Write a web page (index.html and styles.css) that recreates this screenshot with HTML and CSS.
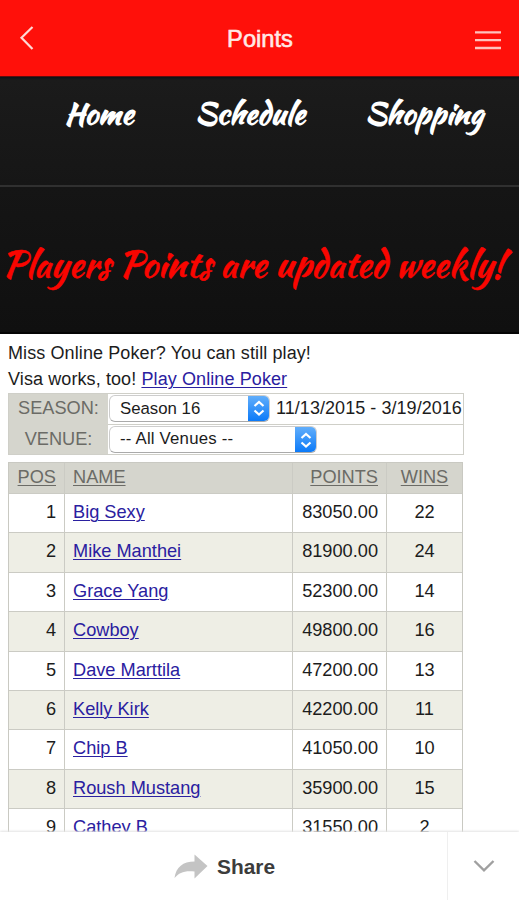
FILE: index.html
```html
<!DOCTYPE html>
<html lang="en">
<head>
<meta charset="utf-8">
<title>Points</title>
<link rel="stylesheet" href="styles.css">
</head>
<body>
<div class="app">
  <header class="topbar">
    <svg class="back" width="16" height="26" viewBox="0 0 16 26"><path d="M13.5 2 2.5 12.7 13.5 24"/></svg>
    <h1>Points</h1>
    <svg class="menu" width="28" height="20" viewBox="0 0 28 20"><path d="M1 2.3h26M1 10.2h26M1 18h26"/></svg>
  </header>
  <nav class="nav">
    <svg width="519" height="109" viewBox="0 0 519 109">
      <text x="64.5" y="47" textLength="69" lengthAdjust="spacingAndGlyphs">Home</text>
      <text x="195" y="47" textLength="110" lengthAdjust="spacingAndGlyphs">Schedule</text>
      <text x="365" y="47" textLength="118" lengthAdjust="spacingAndGlyphs">Shopping</text>
    </svg>
  </nav>
  <section class="banner">
    <svg width="519" height="145" viewBox="0 0 519 145">
      <text x="2" y="90" textLength="502" lengthAdjust="spacingAndGlyphs">Players Points are updated weekly!</text>
    </svg>
  </section>
  <main class="content">
    <p>Miss Online Poker? You can still play!</p>
    <p>Visa works, too! <a>Play Online Poker</a></p>
    <div class="filters">
      <div class="label">SEASON:</div>
      <div class="field">
        <div class="select season"><span>Season 16</span><i><svg width="12" height="16" viewBox="0 0 12 16"><path d="M1.5 6 6 2l4.5 4M1.5 10.5l4.5 4 4.5-4"/></svg></i></div>
        <span class="dates">11/13/2015 - 3/19/2016</span>
      </div>
      <div class="label">VENUE:</div>
      <div class="field">
        <div class="select venue"><span>-- All Venues --</span><i><svg width="12" height="16" viewBox="0 0 12 16"><path d="M1.5 6 6 2l4.5 4M1.5 10.5l4.5 4 4.5-4"/></svg></i></div>
      </div>
    </div>
    <div class="table">
      <div class="row head"><div><u>POS</u></div><div><u>NAME</u></div><div><u>POINTS</u></div><div><u>WINS</u></div></div>
      <div class="row"><div>1</div><div><a>Big Sexy</a></div><div>83050.00</div><div>22</div></div>
      <div class="row alt"><div>2</div><div><a>Mike Manthei</a></div><div>81900.00</div><div>24</div></div>
      <div class="row"><div>3</div><div><a>Grace Yang</a></div><div>52300.00</div><div>14</div></div>
      <div class="row alt"><div>4</div><div><a>Cowboy</a></div><div>49800.00</div><div>16</div></div>
      <div class="row"><div>5</div><div><a>Dave Marttila</a></div><div>47200.00</div><div>13</div></div>
      <div class="row alt"><div>6</div><div><a>Kelly Kirk</a></div><div>42200.00</div><div>11</div></div>
      <div class="row"><div>7</div><div><a>Chip B</a></div><div>41050.00</div><div>10</div></div>
      <div class="row alt"><div>8</div><div><a>Roush Mustang</a></div><div>35900.00</div><div>15</div></div>
      <div class="row"><div>9</div><div><a>Cathey B</a></div><div>31550.00</div><div>2</div></div>
    </div>
  </main>
  <footer class="bottombar">
    <div class="share">
      <svg width="34" height="26" viewBox="0 0 34 26"><path d="M20.5 0.5 33.5 12 20.5 24.5V17.5C10 16.5 5.5 18.5 0.5 24 2 13 9 7.5 20.5 7.5Z"/></svg>
      <span>Share</span>
    </div>
    <div class="collapse"><svg width="22" height="14" viewBox="0 0 22 14"><path d="M1.5 2 11 11.3 20.5 2"/></svg></div>
  </footer>
</div>
</body>
</html>
```

FILE: styles.css
```css
* { box-sizing: border-box; }
body {
  margin: 0;
  background: #fff;
  font: 18.2px/26px "Liberation Sans", Arial, sans-serif;
  color: #1c1c1c;
}
.app {
  width: 519px;
  height: 900px;
  display: flex;
  flex-direction: column;
  overflow: hidden;
}
svg { display: block; fill: none; }
.topbar {
  flex: none;
  height: 77px;
  padding: 0 17px 0 19px;
  display: grid;
  grid-template-columns: 28px 1fr 28px;
  align-items: center;
  background: #ff100a;
  border-bottom: 1px solid #5b0d0d;
}
.topbar h1 {
  margin: 2px 1px 0 0;
  font-size: 23.7px;
  font-weight: 400;
  text-align: center;
  color: #ffe9e6;
  -webkit-text-stroke: 0.6px #ffe9e6;
}
.back { stroke: #ffd9d5; stroke-width: 2.2; }
.menu { stroke: #ffc2bd; stroke-width: 2.3; margin-top: 4px; }
.nav {
  flex: none;
  height: 110px;
  background: linear-gradient(#0c1217 0, #1b1b1b 3px, #161616);
  border-bottom: 2px solid #303030;
}
.nav text, .banner text { font-family: "Kaushan Script", Lato, sans-serif; }
.nav text { font-size: 30px; font-weight: 700; fill: #fff; }
.banner {
  flex: none;
  height: 147px;
  background: linear-gradient(#151515, #101010);
  border-bottom: 2px solid #050505;
}
.banner text { font-size: 35.5px; fill: #fa0500; stroke: #fa0500; stroke-width: 0.6; }
.content {
  flex: none;
  height: 498px;
  padding: 6px 0 0 8px;
  overflow: hidden;
}
.content p { margin: 0; font-size: 18px; letter-spacing: 0.1px; }
a, u { text-decoration: underline; text-decoration-thickness: 1px; text-underline-offset: 2px; }
a { color: #2a20a0; }
.filters {
  width: 456px;
  height: 62px;
  margin-top: 1px;
  display: grid;
  grid-template-columns: 99px 1fr;
  grid-template-rows: 31px 29px;
  border: 1px solid #cfcfc8;
}
.label {
  background: #d5d5cd;
  color: #6b6b66;
  text-align: center;
  line-height: 28px;
}
.field {
  display: flex;
  align-items: center;
  padding-left: 1px;
}
.label:first-child + .field { border-bottom: 1px solid #cfcfc8; padding-bottom: 2px; }
.select {
  height: 27px;
  display: flex;
  justify-content: space-between;
  border: 1px solid #cdcdcd;
  border-bottom-color: #aaa;
  border-radius: 6px;
  overflow: hidden;
  font-size: 16.8px;
  line-height: 26px;
}
.select span { padding-left: 10px; }
.select i {
  width: 22px;
  margin: -1px;
  display: flex;
  align-items: center;
  justify-content: center;
  background: linear-gradient(#65b0fb, #0878f8);
}
.select svg { stroke: #fff; stroke-width: 2.2; }
.season { width: 161px; }
.venue { width: 208px; letter-spacing: 0.2px; line-height: 24px; }
.dates { margin-left: 6px; font-size: 18px; letter-spacing: 0.05px; white-space: nowrap; }
.table {
  width: 455px;
  margin-top: 7px;
  border: solid #c9c9c2;
  border-width: 1px 1px 0;
}
.row {
  height: 39.4px;
  display: grid;
  grid-template-columns: 56px 228px 94px 1fr;
  border-bottom: 1px solid #cbcbc4;
  line-height: 37px;
}
.row > div { padding: 0 8px; border-right: 1px solid #cbcbc4; }
.row > div:last-child { border-right: 0; text-align: center; }
.row > div:nth-child(1), .row > div:nth-child(3) { text-align: right; }
.row.alt { background: #eeeee5; }
.row.head { height: 31px; line-height: 29px; background: #d5d5cd; color: #6b6b66; }
.bottombar {
  flex: none;
  height: 68px;
  display: flex;
  background: #fff;
  box-shadow: 0 -1px 2px #e4e4e4;
  position: relative;
}
.share {
  flex: 1;
  display: flex;
  align-items: center;
  padding: 1px 0 0 174px;
  gap: 9px;
  font-size: 20.9px;
  font-weight: 700;
  color: #3c3c3c;
}
.share path { fill: #c4c4c4; }
.collapse {
  width: 72px;
  display: flex;
  align-items: center;
  justify-content: center;
  border-left: 1px solid #efefef;
}
.collapse svg { stroke: #a0a0a0; stroke-width: 2.4; }
```
